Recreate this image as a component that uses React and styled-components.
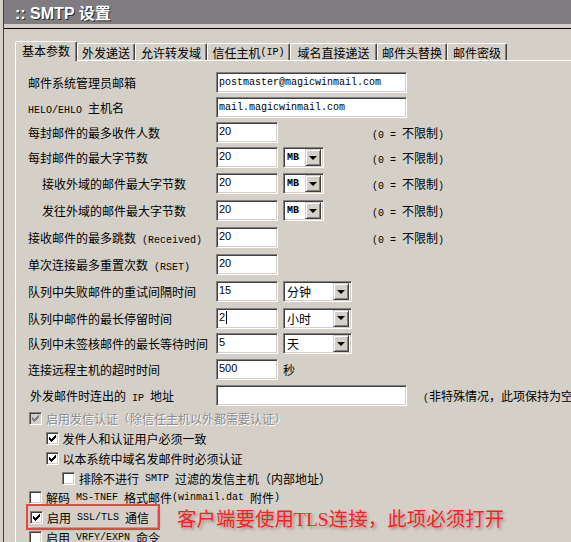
import React from "react"
import styled, { createGlobalStyle } from "styled-components"

const GlobalStyle = createGlobalStyle`
  html, body {
    margin: 0;
    padding: 0;
    background: #d4d0c8;
  }
  body {
    width: 571px;
    height: 542px;
    overflow: hidden;
    font-family: "Noto Sans CJK SC", "Noto Sans", sans-serif;
    font-size: 12px;
    color: #000;
  }
`

const Window = styled.div`
  margin-left: 3px;
  border-left: 1px solid #404040;
  height: 542px;
  overflow: hidden;
`

const TitleBar = styled.div`
  height: 24px;
  background: #7f7d7f;
  display: flex;
  align-items: center;
  padding-left: 11px;
  font-family: "Liberation Sans", "Noto Sans CJK SC", sans-serif;
  font-weight: bold;
  font-size: 16px;
  color: #fff;
  text-shadow: 1px 1px 0 #2a2a2a;
`

const Body = styled.div`
  margin-top: 4px;
  border-top: 1px solid #000;
  padding: 12px 0 0 11px;
`

const TabStrip = styled.div`
  display: flex;
  align-items: flex-end;
  height: 19px;
`

const Tab = styled.div`
  box-sizing: border-box;
  width: ${p => p.w}px;
  height: ${p => (p.active ? 20 : 17)}px;
  margin-bottom: ${p => (p.active ? -1 : 0)}px;
  position: relative;
  z-index: ${p => (p.active ? 1 : 0)};
  background: #d4d0c8;
  border-top: 1px solid #fff;
  border-left: 1px solid #fff;
  border-right: 1px solid #404040;
  border-radius: 2px 2px 0 0;
  box-shadow: inset -1px 0 0 #808080;
  display: flex;
  align-items: center;
  justify-content: center;
  padding-bottom: ${p => (p.active ? 2 : 0)}px;
  white-space: nowrap;
`

const Panel = styled.div`
  border-top: 1px solid #fff;
  border-left: 1px solid #fff;
  padding: 8px 0 0 12px;
  white-space: nowrap;
`

const FormRow = styled.div`
  display: flex;
  align-items: center;
  height: ${p => p.h}px;
`

const Label = styled.div`
  box-sizing: border-box;
  width: 188px;
  padding-left: ${p => p.indent || 0}px;
  flex: none;
`

const Lat = styled.span`
  font-family: "Liberation Mono", monospace;
  font-size: 10px;
  white-space: pre;
`

const Fields = styled.div`
  display: flex;
  align-items: center;
  gap: 5px;
  width: ${p => p.w || 156}px;
  flex: none;
`

const TextBox = styled.div`
  box-sizing: border-box;
  flex: none;
  width: ${p => p.w}px;
  height: 21px;
  background: #fff;
  border: 1px solid;
  border-color: #808080 #fff #fff #808080;
  box-shadow: inset 1px 1px 0 #404040, inset -1px -1px 0 #d4d0c8;
  padding: ${p => (p.mono ? "2px 0 0 2px" : "1px 0 0 2px")};
  font-family: ${p => (p.mono ? '"Liberation Mono", monospace' : '"Liberation Sans", Arial, sans-serif')};
  font-size: ${p => (p.mono ? 10 : 11)}px;
  line-height: 15px;
  display: flex;
  align-items: flex-start;
`

const Caret = styled.span`
  display: inline-block;
  width: 1px;
  height: 13px;
  margin: 1px 0 0 1px;
  background: #000;
`

const Select = styled.div`
  box-sizing: border-box;
  flex: none;
  width: ${p => p.w}px;
  height: 21px;
  background: #fff;
  border: 1px solid;
  border-color: #808080 #fff #fff #808080;
  box-shadow: inset 1px 1px 0 #404040, inset -1px -1px 0 #d4d0c8;
  display: flex;
  align-items: center;
  justify-content: space-between;
  padding: 2px 2px 2px 3px;
`

const SelectText = styled.span`
  font-family: ${p => (p.mono ? '"Liberation Mono", monospace' : "inherit")};
  font-size: ${p => (p.mono ? 10 : 12)}px;
  font-weight: ${p => (p.mono ? "bold" : "normal")};
`

const DropButton = styled.span`
  box-sizing: border-box;
  width: 16px;
  height: 17px;
  background: #d4d0c8;
  border: 1px solid;
  border-color: #d4d0c8 #404040 #404040 #d4d0c8;
  box-shadow: inset 1px 1px 0 #fff, inset -1px -1px 0 #808080;
  display: flex;
  align-items: center;
  justify-content: center;

  &::after {
    content: "";
    border-left: 4px solid transparent;
    border-right: 4px solid transparent;
    border-top: 4px solid #000;
  }
`

const Note = styled.span`
  flex: none;
`

const Unit = styled.span`
  margin-left: 0;
`

const CheckRow = styled.div`
  display: flex;
  align-items: center;
  height: ${p => p.h}px;
  padding-left: ${p => 1 + p.level * 16.5}px;
  color: ${p => (p.disabled ? "#8c8c8c" : "#000")};
  text-shadow: ${p => (p.disabled ? "1px 1px 0 #fff" : "none")};
`

const Box = styled.span`
  box-sizing: border-box;
  width: 13px;
  height: 13px;
  flex: none;
  margin-right: 4px;
  background: ${p => (p.disabled ? "#d4d0c8" : "#fff")};
  border: 1px solid;
  border-color: #808080 #fff #fff #808080;
  box-shadow: inset 1px 1px 0 #404040, inset -1px -1px 0 #d4d0c8;
  display: inline-flex;
  align-items: center;
  justify-content: center;
`

const Highlight = styled.div`
  display: flex;
  align-items: center;
  height: 20px;
  padding: 0 8px 0 1px;
  outline: 2px solid #e84646;
  outline-offset: 1px;
  box-shadow: 2px 2px 3px rgba(0, 0, 0, 0.25);
`

const Annotation = styled.span`
  margin-left: 20px;
  color: #ff1e1e;
  font-family: "Liberation Serif", "Noto Sans CJK SC", serif;
  font-size: 19.5px;
  text-shadow: 2px 2px 3px rgba(0, 0, 0, 0.3);
`

const Check = ({ on, disabled }) => (
  <Box disabled={disabled}>
    {on && (
      <svg width="7" height="7" viewBox="0 0 7 7" shapeRendering="crispEdges">
        <polygon points="0,2 2,4 6,0 7,0 7,3 2,7 0,5" fill={disabled ? "#808080" : "#000"} />
      </svg>
    )}
  </Box>
)

const Drop = ({ w, mono, children }) => (
  <Select w={w}>
    <SelectText mono={mono}>{children}</SelectText>
    <DropButton />
  </Select>
)

const Unlimited = () => (
  <Note>
    <Lat>(0 = </Lat>不限制<Lat>)</Lat>
  </Note>
)

const tabs = [
  { label: "基本参数", w: 62, active: true },
  { label: "外发递送", w: 58 },
  { label: "允许转发域", w: 72 },
  { label: <>信任主机<Lat>(IP)</Lat></>, w: 83 },
  { label: "域名直接递送", w: 87 },
  { label: "邮件头替换", w: 70 },
  { label: "邮件密级", w: 60 },
]

const App = () => {
  return (
    <>
      <GlobalStyle />
      <Window>
        <TitleBar>:: SMTP 设置</TitleBar>
        <Body>
          <TabStrip>
            {tabs.map((t, i) => (
              <Tab key={i} w={t.w} active={t.active}>{t.label}</Tab>
            ))}
          </TabStrip>
          <Panel>
            <FormRow h={26}>
              <Label>邮件系统管理员邮箱</Label>
              <Fields><TextBox w={191} mono>postmaster@magicwinmail.com</TextBox></Fields>
            </FormRow>
            <FormRow h={25}>
              <Label><Lat>HELO/EHLO </Lat>主机名</Label>
              <Fields><TextBox w={191} mono>mail.magicwinmail.com</TextBox></Fields>
            </FormRow>
            <FormRow h={25}>
              <Label>每封邮件的最多收件人数</Label>
              <Fields><TextBox w={62}>20</TextBox></Fields>
              <Unlimited />
            </FormRow>
            <FormRow h={25}>
              <Label>每封邮件的最大字节数</Label>
              <Fields><TextBox w={62}>20</TextBox><Drop w={41} mono>MB</Drop></Fields>
              <Unlimited />
            </FormRow>
            <FormRow h={27}>
              <Label indent={14}>接收外域的邮件最大字节数</Label>
              <Fields><TextBox w={62}>20</TextBox><Drop w={41} mono>MB</Drop></Fields>
              <Unlimited />
            </FormRow>
            <FormRow h={27}>
              <Label indent={14}>发往外域的邮件最大字节数</Label>
              <Fields><TextBox w={62}>20</TextBox><Drop w={41} mono>MB</Drop></Fields>
              <Unlimited />
            </FormRow>
            <FormRow h={26}>
              <Label>接收邮件的最多跳数<Lat> (Received)</Lat></Label>
              <Fields><TextBox w={62}>20</TextBox></Fields>
              <Unlimited />
            </FormRow>
            <FormRow h={28}>
              <Label>单次连接最多重置次数<Lat> (RSET)</Lat></Label>
              <Fields><TextBox w={62}>20</TextBox></Fields>
            </FormRow>
            <FormRow h={27}>
              <Label>队列中失败邮件的重试间隔时间</Label>
              <Fields><TextBox w={62}>15</TextBox><Drop w={69}>分钟</Drop></Fields>
            </FormRow>
            <FormRow h={26}>
              <Label>队列中邮件的最长停留时间</Label>
              <Fields><TextBox w={62}>2<Caret /></TextBox><Drop w={69}>小时</Drop></Fields>
            </FormRow>
            <FormRow h={25}>
              <Label>队列中未签核邮件的最长等待时间</Label>
              <Fields><TextBox w={62}>5</TextBox><Drop w={69}>天</Drop></Fields>
            </FormRow>
            <FormRow h={26}>
              <Label>连接远程主机的超时时间</Label>
              <Fields><TextBox w={62}>500</TextBox><Unit>秒</Unit></Fields>
            </FormRow>
            <FormRow h={26}>
              <Label indent={2}>外发邮件时连出的<Lat> IP </Lat>地址</Label>
              <Fields w={207}><TextBox w={191} /></Fields>
              <Note><Lat>(</Lat>非特殊情况，此项保持为空</Note>
            </FormRow>

            <CheckRow h={20} level={0} disabled>
              <Check on disabled />启用发信认证<Lat> (</Lat>除信任主机以外都需要认证<Lat>)</Lat>
            </CheckRow>
            <CheckRow h={21} level={1}>
              <Check on />发件人和认证用户必须一致
            </CheckRow>
            <CheckRow h={19} level={1}>
              <Check on />以本系统中域名发邮件时必须认证
            </CheckRow>
            <CheckRow h={20} level={2}>
              <Check />排除不进行<Lat> SMTP </Lat>过滤的发信主机（内部地址）
            </CheckRow>
            <CheckRow h={19} level={0}>
              <Check />解码<Lat> MS-TNEF </Lat>格式邮件<Lat>(winmail.dat </Lat>附件<Lat>)</Lat>
            </CheckRow>
            <CheckRow h={20} level={0}>
              <Highlight>
                <Check on />启用<Lat> SSL/TLS </Lat>通信
              </Highlight>
              <Annotation>客户端要使用TLS连接，此项必须打开</Annotation>
            </CheckRow>
            <CheckRow h={20} level={0}>
              <Check />启用<Lat> VRFY/EXPN </Lat>命令
            </CheckRow>
          </Panel>
        </Body>
      </Window>
    </>
  )
}

export default App
